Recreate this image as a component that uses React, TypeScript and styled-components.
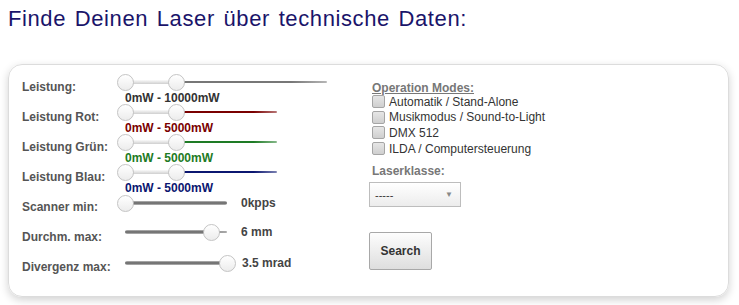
import React from "react";
import styled, { createGlobalStyle } from "styled-components";

const GlobalStyle = createGlobalStyle`
  html, body { margin: 0; padding: 0; background: #fff; }
  body { font-family: "Liberation Sans", Arial, sans-serif; }
`;

const Page = styled.div`
  padding: 6px 10px 10px 8px;
`;

const Title = styled.h1`
  margin: 0;
  font-size: 22px;
  line-height: 26px;
  font-weight: 400;
  letter-spacing: 0.6px;
  word-spacing: 2px;
  color: #1a146a;
`;

const Card = styled.div`
  margin-top: 32px;
  display: flex;
  border: 1px solid #dcdcdc;
  border-radius: 14px;
  box-shadow: 0 3px 8px rgba(0, 0, 0, 0.18);
  padding: 7px 13px 14px 13px;
  height: 210px;
`;

const LeftCol = styled.div`
  width: 347px;
  display: flex;
  flex-direction: column;
`;

const Row = styled.div`
  height: 30px;
  display: grid;
  grid-template-columns: 95px 124px auto;
  align-items: start;
`;

const Label = styled.div`
  font-size: 12px;
  font-weight: 700;
  color: #555;
  line-height: 30px;
`;

const SliderCell = styled.div<{ $top: number }>`
  margin-top: ${(p) => p.$top}px;
  grid-column: 2 / 4;
  display: flex;
  align-items: center;
`;

const SliderBox = styled.div<{ $w: number }>`
  position: relative;
  width: ${(p) => p.$w}px;
  height: 16px;
  flex: none;
`;

const Rail = styled.div`
  position: absolute;
  top: 6px;
  height: 4px;
  border-radius: 2px;
  background: linear-gradient(to bottom, #fafafa, #cfcfcf);
`;

const Line = styled.div<{ $c: string }>`
  position: absolute;
  top: 7px;
  height: 2px;
  border-radius: 1px;
  background: linear-gradient(to right, ${(p) => p.$c} 0%, ${(p) => p.$c} 75%, ${(p) => p.$c}88 100%);
`;

const DarkRail = styled.div<{ $light?: boolean }>`
  position: absolute;
  top: 6px;
  height: 4px;
  border-radius: 2px;
  background: ${(p) =>
    p.$light
      ? "linear-gradient(to right, #888, #aaa)"
      : "linear-gradient(to bottom, #bbb, #5e5e5e 50%, #bbb)"};
`;

const Knob = styled.div`
  position: absolute;
  top: 0;
  width: 15px;
  height: 15px;
  border-radius: 50%;
  border: 1px solid #c4c4c4;
  background: linear-gradient(to bottom, #fff, #ececec);
  box-sizing: content-box;
`;

const Range = styled.div<{ $c: string }>`
  font-size: 12px;
  font-weight: 700;
  color: ${(p) => p.$c};
  line-height: 14px;
  margin: 1px 0 0 8px;
`;

const DualWrap = styled.div`
  grid-column: 2 / 4;
  margin-top: 2px;
`;

const Value = styled.div`
  font-size: 12px;
  font-weight: 700;
  color: #444;
  line-height: 16px;
  margin-left: 14px;
`;

const RightCol = styled.div`
  padding-top: 9px;
  display: flex;
  flex-direction: column;
  align-items: flex-start;
`;

const Heading = styled.div<{ $u?: boolean }>`
  font-size: 12px;
  font-weight: 700;
  color: #777;
  line-height: 14px;
  margin-left: 3px;
  text-decoration: ${(p) => (p.$u ? "underline" : "none")};
`;

const CheckList = styled.div`
  margin-left: 3px;
  margin-top: -1px;
  margin-bottom: 8px;
`;

const CheckRow = styled.label`
  display: flex;
  align-items: center;
  height: 15.6px;
  font-size: 12px;
  color: #333;
`;

const Box = styled.span`
  width: 11px;
  height: 11px;
  border: 1px solid #a5a5a5;
  border-radius: 2px;
  background: linear-gradient(to bottom, #e6e6e6, #cfcfcf);
  margin-right: 4px;
  flex: none;
`;

const Select = styled.div`
  margin-top: 4px;
  width: 78px;
  height: 23px;
  border: 1px solid #bdbdbd;
  background: linear-gradient(to bottom, #fff, #ececec);
  display: flex;
  align-items: center;
  justify-content: space-between;
  padding: 0 7px 0 5px;
  box-sizing: content-box;
  font-size: 11px;
  color: #333;
`;

const Arrow = styled.span`
  font-size: 8px;
  color: #888;
`;

const Button = styled.button`
  margin-top: 25px;
  width: 63px;
  height: 38px;
  border: 1px solid #a8a8a8;
  border-radius: 2px;
  background: linear-gradient(to bottom, #fdfdfd, #dedede);
  font-family: "Liberation Sans", Arial, sans-serif;
  font-size: 12px;
  font-weight: 700;
  color: #333;
  padding: 0;
`;

type Dual = { label: string; width: number; color: string; range: string; rangeColor: string };

const duals: Dual[] = [
  { label: "Leistung:", width: 210, color: "#777777", range: "0mW - 10000mW", rangeColor: "#333" },
  { label: "Leistung Rot:", width: 160, color: "#7a0000", range: "0mW - 5000mW", rangeColor: "#7a0000" },
  { label: "Leistung Grün:", width: 160, color: "#1e7b25", range: "0mW - 5000mW", rangeColor: "#1e7b25" },
  { label: "Leistung Blau:", width: 160, color: "#0b1670", range: "0mW - 5000mW", rangeColor: "#0b1670" },
];

function DualSlider({ d }: { d: Dual }) {
  const k2 = 51;
  return (
    <DualWrap>
      <SliderBox $w={d.width}>
        <Rail style={{ left: 8, width: k2 }} />
        <Line $c={d.color} style={{ left: k2 + 15, width: d.width - k2 - 15 }} />
        <Knob style={{ left: 0 }} />
        <Knob style={{ left: k2 }} />
      </SliderBox>
      <Range $c={d.rangeColor}>{d.range}</Range>
    </DualWrap>
  );
}

const modes = [
  "Automatik / Stand-Alone",
  "Musikmodus / Sound-to-Light",
  "DMX 512",
  "ILDA / Computersteuerung",
];

export default function App() {
  return (
    <Page>
      <GlobalStyle />
      <Title>Finde Deinen Laser über technische Daten:</Title>
      <Card>
        <LeftCol>
          {duals.map((d) => (
            <Row key={d.label}>
              <Label>{d.label}</Label>
              <DualSlider d={d} />
            </Row>
          ))}
          <Row>
            <Label>Scanner min:</Label>
            <SliderCell $top={3}>
              <SliderBox $w={110}>
                <DarkRail style={{ left: 2, width: 108 }} />
                <Knob style={{ left: 0 }} />
              </SliderBox>
              <Value>0kpps</Value>
            </SliderCell>
          </Row>
          <Row>
            <Label>Durchm. max:</Label>
            <SliderCell $top={2}>
              <SliderBox $w={110}>
                <DarkRail style={{ left: 8, width: 82 }} />
                <DarkRail $light style={{ left: 90, width: 20, top: 7, height: 2 }} />
                <Knob style={{ left: 86 }} />
              </SliderBox>
              <Value>6 mm</Value>
            </SliderCell>
          </Row>
          <Row>
            <Label>Divergenz max:</Label>
            <SliderCell $top={3}>
              <SliderBox $w={119}>
                <DarkRail style={{ left: 8, width: 100 }} />
                <Knob style={{ left: 102 }} />
              </SliderBox>
              <Value style={{ marginLeft: 6 }}>3.5 mrad</Value>
            </SliderCell>
          </Row>
        </LeftCol>
        <RightCol>
          <Heading $u>Operation Modes:</Heading>
          <CheckList>
            {modes.map((m) => (
              <CheckRow key={m}>
                <Box />
                {m}
              </CheckRow>
            ))}
          </CheckList>
          <Heading>Laserklasse:</Heading>
          <Select>
            <span>-----</span>
            <Arrow>▼</Arrow>
          </Select>
          <Button>Search</Button>
        </RightCol>
      </Card>
    </Page>
  );
}
